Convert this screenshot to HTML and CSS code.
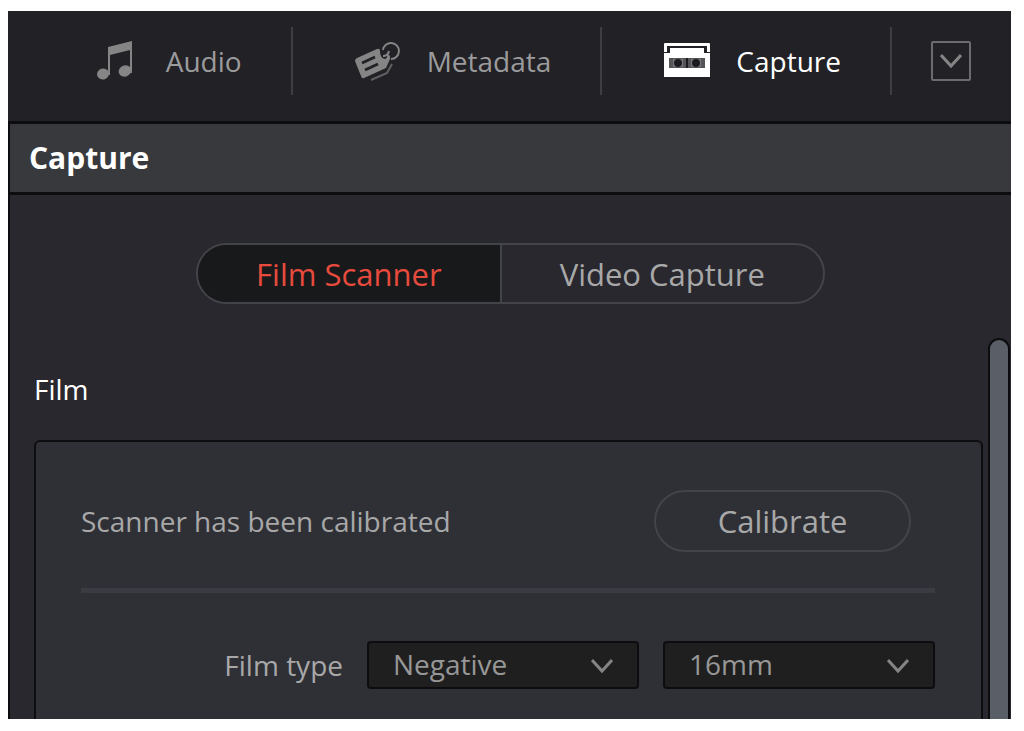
FILE: index.html
```
<!DOCTYPE html>
<html lang="en">

<head>
  <meta charset="utf-8">
  <title>Capture</title>
  <link rel="stylesheet" href="styles.css">
</head>

<body>
  <div class="window">
    <nav class="toolbar">
      <button type="button" class="tab">
        <svg class="tab-icon" viewBox="0 0 48 40" aria-hidden="true">
          <path d="M15 6 L39 0 V32 H37 V9 L17 14 V34 H15 Z" fill="currentColor"/>
          <ellipse cx="10" cy="33" rx="6" ry="5.5" transform="rotate(-20 10 33)" fill="currentColor"/>
          <ellipse cx="32" cy="30" rx="6.5" ry="5.5" transform="rotate(-20 32 30)" fill="currentColor"/>
        </svg>
        Audio
      </button>
      <button type="button" class="tab">
        <svg class="tab-icon" viewBox="0 0 48 40" aria-hidden="true">
          <path d="M3 17 L23 8 Q26 7 26 10 Q26 17 31 18 Q34 17 33 13 Q37 14 36 18 L32 27 L10 37 Q8 38 7 35 L1 20 Q1 18 3 17 Z" fill="currentColor"/>
          <path d="M8 22 L21 16 M11 29 L24 23" class="tag-lines"/>
          <path d="M17 39 L33 32 L38 23" class="tag-back"/>
          <path d="M29 9 A8 8 0 1 1 37 18 M29 15 Q34 15 35 10" class="tag-ring"/>
        </svg>
        Metadata
      </button>
      <button type="button" class="tab active">
        <svg class="tab-icon" viewBox="0 0 48 40" aria-hidden="true">
          <path d="M1 11 V3 Q1 2 2 2 H46 Q47 2 47 3 V11 H44 V5 H4 V11 Z" fill="currentColor"/>
          <path d="M7 7 H41 V12 H47 V36 H1 V12 H7 Z" fill="currentColor"/>
          <rect x="6" y="17" width="36" height="10" fill="#555558"/>
          <path d="M10 18 H20 V26 H10 Z M28 18 H38 V26 H28 Z" fill="#77777a"/>
          <path d="M23 17 H25 V27 H23 Z" fill="#1c1c20"/>
          <circle cx="15" cy="22" r="4" fill="#1c1c20"/>
          <circle cx="33" cy="22" r="4" fill="#1c1c20"/>
        </svg>
        Capture
      </button>
      <button type="button" class="menu-button" aria-label="More">
        <svg class="chevron" viewBox="0 0 22 16" aria-hidden="true"><path d="M1 2 L11 13 L21 2"/></svg>
      </button>
    </nav>

    <main class="capture">
      <h1 class="capture-title">Capture</h1>

      <div class="mode-row">
        <div class="mode-switch">
          <button type="button" class="mode selected">Film Scanner</button>
          <button type="button" class="mode">Video Capture</button>
        </div>
      </div>

      <div class="scroll-area">
        <section class="film">
          <h2 class="film-title">Film</h2>
          <div class="panel">
            <div class="calibration">
              <span>Scanner has been calibrated</span>
              <button type="button" class="calibrate">Calibrate</button>
            </div>
            <hr class="separator">
            <div class="film-type">
              <label for="film-type">Film type</label>
              <div class="dropdown">
                <select id="film-type">
                  <option>Negative</option>
                  <option>Positive</option>
                </select>
                <svg class="chevron" viewBox="0 0 22 16" aria-hidden="true"><path d="M1 2 L11 13 L21 2"/></svg>
              </div>
              <div class="dropdown">
                <select aria-label="Film gauge">
                  <option>16mm</option>
                  <option>35mm</option>
                </select>
                <svg class="chevron" viewBox="0 0 22 16" aria-hidden="true"><path d="M1 2 L11 13 L21 2"/></svg>
              </div>
            </div>
          </div>
        </section>
        <div class="scrollbar"></div>
      </div>
    </main>
  </div>
</body>

</html>
```
FILE: styles.css
```
* {
  box-sizing: border-box;
}

body {
  margin: 11px 13px 13px 8px;
  background: #fff;
  color: #a8a8a9;
  font: 28px/40px "Open Sans", "Noto Sans", sans-serif;
}

button,
select {
  margin: 0;
  padding: 0;
  border: 0;
  background: none;
  color: inherit;
  font: inherit;
}

h1,
h2 {
  margin: 0;
  color: #fff;
}

.window {
  background: #29282e;
}

/* Toolbar */
.toolbar {
  display: flex;
  align-items: center;
  justify-content: flex-end;
  height: 110px;
  padding: 0 40px 10px 0;
  background: #222126;
}

.tab {
  display: flex;
  align-items: center;
  gap: 25px;
  height: 68px;
  padding: 0 49px 0 61px;
  border-right: 2px solid #3d3d42;
  color: #9b9b9c;
}

.tab.active {
  color: #fff;
}

.tab-icon {
  width: 48px;
  height: 40px;
}

.tab:not(.active) .tab-icon {
  color: #858585;
}

.tag-lines,
.tag-back,
.tag-ring {
  fill: none;
  stroke: #222126;
  stroke-width: 3;
}

.tag-back {
  stroke: #606062;
  stroke-width: 2;
}

.tag-ring {
  stroke: #858585;
  stroke-width: 2;
}

.menu-button {
  display: flex;
  align-items: center;
  justify-content: center;
  width: 40px;
  height: 40px;
  margin-left: 39px;
  border: 2px solid #6c6c6e;
  border-radius: 2px;
}

.chevron {
  width: 22px;
  height: 16px;
  fill: none;
  stroke: #858586;
  stroke-width: 3;
}

/* Capture page */
.capture {
  border-left: 2px solid #0d0d0f;
}

.capture-title {
  height: 74px;
  padding: 14px 19px;
  border-top: 3px solid #0d0d0f;
  border-bottom: 3px solid #0d0d0f;
  background: #38393d;
  font-size: 30px;
  font-weight: 700;
}

.mode-row {
  display: flex;
  justify-content: center;
  padding: 48px 0 34px;
}

.mode-switch {
  display: flex;
  height: 61px;
  overflow: hidden;
  border: 2px solid #434449;
  border-radius: 32px;
}

.mode {
  padding: 0 58px;
  font-size: 31px;
}

.mode.selected {
  border-right: 2px solid #434449;
  background: #18191b;
  color: #e64b3d;
}

.scroll-area {
  display: flex;
  gap: 5px;
  padding: 0 1px 0 24px;
}

.scrollbar {
  width: 22px;
  border: 2px solid #0d0d0f;
  border-bottom: 0;
  border-radius: 11px 11px 0 0;
  background: #5a5e67;
}

.film {
  flex: 1;
}

.film-title {
  padding: 31px 0;
  font-size: 28px;
  font-weight: 400;
}

.panel {
  padding: 48px 46px 30px 45px;
  border: 2px solid #0d0d0f;
  border-bottom: 0;
  border-radius: 6px 6px 0 0;
  background: #2f3035;
}

.calibration {
  display: flex;
  align-items: center;
  justify-content: space-between;
  padding-right: 24px;
}

.calibrate {
  width: 257px;
  height: 62px;
  border: 2px solid #434449;
  border-radius: 31px;
  font-size: 31px;
}

.separator {
  height: 5px;
  margin: 36px 0 48px;
  border: 0;
  background: #3a3b43;
}

.film-type {
  display: flex;
  align-items: center;
  justify-content: flex-end;
  gap: 24px;
}

.dropdown {
  position: relative;
}

.dropdown select {
  display: block;
  width: 272px;
  height: 48px;
  padding: 0 56px 2px 24px;
  border: 2px solid #0d0d0f;
  border-radius: 4px;
  background: #1f1f1f;
  color: #979797;
  appearance: none;
}

.dropdown .chevron {
  position: absolute;
  top: 17px;
  right: 26px;
  pointer-events: none;
}
```
